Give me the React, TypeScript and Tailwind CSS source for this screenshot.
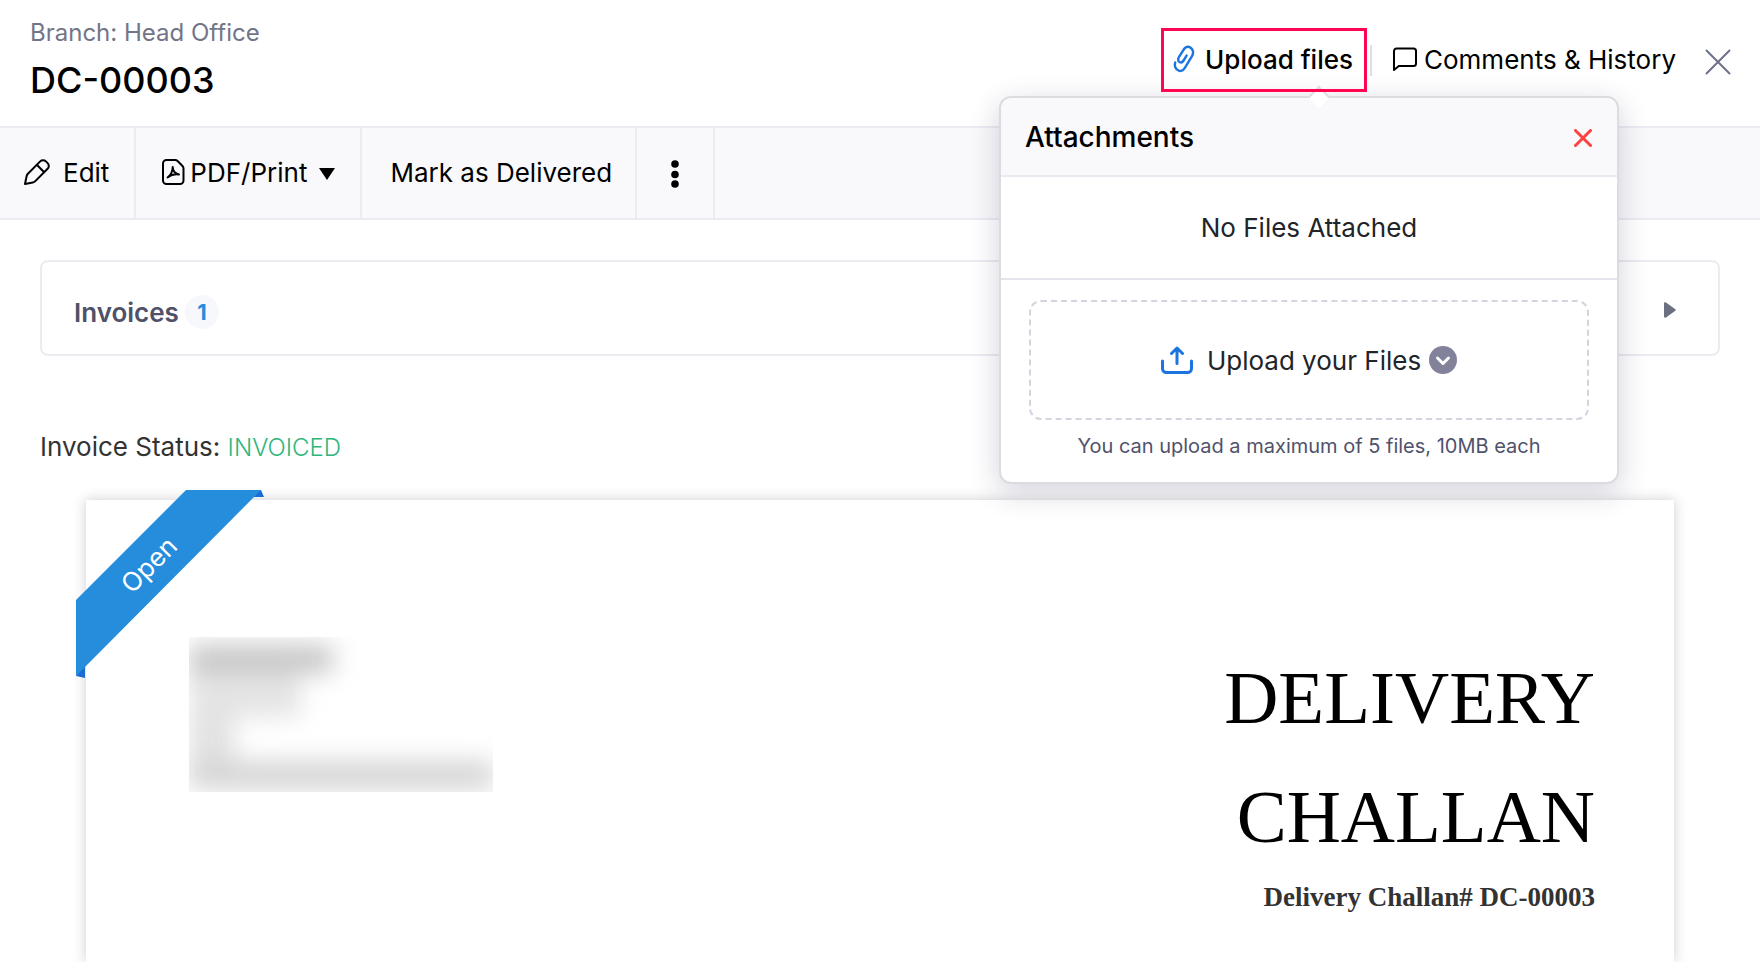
import React from 'react';

const PencilIcon = () => (
  <svg width="28" height="28" viewBox="0 0 28 28" fill="none" stroke="currentColor" strokeWidth="2" strokeLinejoin="round">
    <path d="M2 26l1.600-7.800c.2-1 .6-1.800 1.300-2.500L17.200 3.400a4 4 0 0 1 5.700 0l1.700 1.700a4 4 0 0 1 0 5.700L12.300 23.100c-.7.700-1.500 1.100-2.500 1.300L2 26z" />
    <path d="M13.800 6.800l7.400 7.400" />
  </svg>
);

const PdfIcon = () => (
  <svg width="24" height="28" viewBox="0 0 24 28" fill="none" stroke="currentColor" strokeWidth="2" strokeLinejoin="round" strokeLinecap="round">
    <path d="M5.500 2h8.700c.9 0 1.800.4 2.400 1l4.900 5c.6.600 1 1.500 1 2.400v12.100a3.500 3.500 0 0 1-3.500 3.500H5.500A3.500 3.500 0 0 1 2 22.500v-17A3.500 3.500 0 0 1 5.500 2z" />
    <path d="M6.500 19.500c3-2.200 5.200-6.500 5.200-10.500 0 3.500 2.500 6.500 6.300 7.500-3.800-.6-8 .3-11.500 3z" />
  </svg>
);

const ClipIcon = () => (
  <svg width="22" height="28" viewBox="0 0 22 28" fill="none" stroke="#1b74e0" strokeWidth="2.4" strokeLinecap="round">
    <path d="M2.200 17.500c-1 3.500.4 7.200 3.500 8.200 2.600.8 4.800-.6 6-2.700l7.300-11.800c1.800-3 1.300-7-1.500-8.600-2.700-1.500-5.400-.3-7 2.200l-4.600 7.400c-1.200 2-.8 4 .6 4.800 1.500.8 3.100.1 4.100-1.500l3-5" />
  </svg>
);

const CommentIcon = () => (
  <svg width="26" height="26" viewBox="0 0 26 26" fill="none" stroke="currentColor" strokeWidth="2" strokeLinejoin="round">
    <path d="M4.500 2.500h17A2.500 2.500 0 0 1 24 5v12.500a2.500 2.500 0 0 1-2.500 2.500H6.800L2 24V5a2.500 2.500 0 0 1 2.500-2.500z" />
  </svg>
);

const CrossIcon = ({ size, width }: { size: number; width: number }) => (
  <svg width={size} height={size} viewBox={`0 0 ${size} ${size}`} stroke="currentColor" strokeWidth={width} strokeLinecap="round">
    <path d={`M1.500 1.500L${size - 1.5} ${size - 1.5}M${size - 1.5} 1.500L1.500 ${size - 1.5}`} />
  </svg>
);

const UploadIcon = () => (
  <svg width="32" height="28" viewBox="0 0 32 28" fill="none" stroke="#1b74e0" strokeWidth="3" strokeLinecap="round" strokeLinejoin="round">
    <path d="M1.500 15v7.500a4 4 0 0 0 4 4h21a4 4 0 0 0 4-4V15" />
    <path d="M16 17.500V2.500M10.500 7.500L16 2l5.500 5.500" />
  </svg>
);

const AttachmentsPopup = () => (
  <div className="absolute top-[68px] right-[-252px] z-20 w-[620px] rounded-xl border-2 border-[#dcdce0] bg-white shadow-[0_8px_30px_rgba(30,30,80,0.2)]">
    <div className="absolute -top-[9px] left-[310px] size-4 rotate-45 border-t-2 border-l-2 border-[#dcdce0] bg-white" />
    <div className="flex h-[79px] items-center justify-between rounded-t-xl border-b-2 border-[#e9e9f2] bg-[#f9f9fb] pr-[25px] pl-6">
      <h2 className="text-[28px] leading-9 font-medium">Attachments</h2>
      <button aria-label="Close attachments" className="pt-[2px] text-[#fb4340]">
        <CrossIcon size={18} width={3} />
      </button>
    </div>
    <p className="flex h-[103px] items-center justify-center border-b-2 border-[#e4e4ec] text-[26px] text-[#212529]">
      No Files Attached
    </p>
    <div className="px-7 pt-5 pb-5">
      <button className="flex h-[120px] w-full items-center justify-center rounded-xl border-2 border-dashed border-[#d4d4e0] text-[26px] text-[#212529]">
        <UploadIcon />
        <span className="ml-[14px]">Upload your Files</span>
        <svg className="ml-2" width="28" height="28" viewBox="0 0 28 28" fill="none">
          <circle cx="14" cy="14" r="14" fill="#82829a" />
          <path d="M8.500 12l5.500 5.500 5.500-5.500" stroke="#fff" strokeWidth="3" strokeLinecap="round" strokeLinejoin="round" />
        </svg>
      </button>
      <p className="mt-[10px] text-center text-[20px] leading-8 text-[#50526a]">
        You can upload a maximum of 5 files, 10MB each
      </p>
    </div>
  </div>
);

const Header = () => (
  <header className="flex min-h-[126px] items-start justify-between">
    <div className="pt-[17px] pl-[30px]">
      <p className="text-2xl leading-8 text-[#717587]">Branch: Head Office</p>
      <h1 className="mt-[9px] text-4xl leading-[44px] font-medium">DC-00003</h1>
    </div>
    <div className="flex items-center pt-7 pr-[29px]">
      <div className="relative">
        <button className="relative z-30 flex h-16 items-center gap-[10px] border-[3px] border-[#ff0552] pr-[11px] pb-[2px] pl-[9px] text-[26px] font-medium">
          <ClipIcon />
          Upload files
        </button>
        <AttachmentsPopup />
      </div>
      <span className="ml-[3px] h-[31px] w-[2px] bg-[#dfdfe2]" />
      <button className="ml-5 flex items-center gap-[6px] pb-[2px] text-[26px]">
        <CommentIcon />
        Comments &amp; History
      </button>
      <button aria-label="Close" className="ml-[29px] pt-1 text-[#6c718a]">
        <CrossIcon size={26} width={2} />
      </button>
    </div>
  </header>
);

const Toolbar = () => (
  <nav className="flex h-[94px] border-y-2 border-[#ebebf2] bg-[#f9f9fb] text-[26px]">
    <button className="flex items-center border-r-2 border-[#ebebf2] pr-[25px] pb-[2px] pl-[23px]">
      <PencilIcon />
      <span className="ml-3">Edit</span>
    </button>
    <button className="flex items-center border-r-2 border-[#ebebf2] pr-[25px] pb-[2px] pl-[25px]">
      <PdfIcon />
      <span className="ml-[5px]">PDF/Print</span>
      <svg className="mt-1 ml-3" width="16" height="12" viewBox="0 0 16 12">
        <path d="M0 0h16L8 12z" fill="currentColor" />
      </svg>
    </button>
    <button className="border-r-2 border-[#ebebf2] pr-[23px] pb-[2px] pl-7">Mark as Delivered</button>
    <button aria-label="More actions" className="flex w-[78px] items-center justify-center border-r-2 border-[#ebebf2]">
      <svg width="8" height="30" viewBox="0 0 8 30" fill="currentColor">
        <circle cx="4" cy="6" r="3.800" />
        <circle cx="4" cy="16.500" r="3.800" />
        <circle cx="4" cy="26" r="3.800" />
      </svg>
    </button>
  </nav>
);

const Ribbon = () => (
  <div className="absolute -top-[10px] -left-[10px] size-[190px]">
    <svg width="190" height="190" viewBox="0 0 190 190">
      <path d="M174 7h14l-3-7h-5zM0 186l9 2v-14z" fill="#1a6dd4" />
      <path d="M0 110L110 0h75L0 186z" fill="#268ddd" />
    </svg>
    <span className="absolute top-[57px] left-[33px] w-20 -rotate-45 text-center text-[26px] leading-9 text-white">
      Open
    </span>
  </div>
);

// organization address is kept unreadable on purpose
const HiddenAddress = () => (
  <div className="h-[155px] w-[304px] overflow-hidden">
    <div className="flex flex-col items-start blur-[12px]">
      <div className="mt-2 h-7 w-[144px] bg-[#c6c6c6]" />
      <div className="h-11 w-[112px] bg-[#e4e4e4]" />
      <div className="h-11 w-[46px] bg-[#e2e2e2]" />
      <div className="h-7 w-[304px] bg-[#d4d4d4]" />
    </div>
  </div>
);

const Paper = () => (
  <section className="relative mx-[86px] mt-[33px] flex flex-1 items-start justify-between bg-white pr-[79px] pb-10 pl-[103px] shadow-[0_0_12px_rgba(60,60,80,0.25)]">
    <Ribbon />
    <div className="pt-[137px]">
      <HiddenAddress />
    </div>
    <div className="w-[400px] pt-[138px] text-right font-['Liberation_Serif',serif]">
      <h2 className="text-[75px] leading-[119px]">DELIVERY CHALLAN</h2>
      <p className="mt-[5px] text-[27px] leading-8 font-bold text-[#333]">Delivery Challan# DC-00003</p>
    </div>
  </section>
);

const App: React.FC = () => {
  return (
    <div className="flex min-h-screen flex-col overflow-hidden bg-white font-['Inter',sans-serif] text-black">
      <Header />
      <Toolbar />
      <section className="mx-10 mt-10 flex h-24 items-center justify-between rounded-lg border-2 border-[#ebebf2] pr-[42px] pl-8">
        <h3 className="flex items-center gap-[6px] pt-2 text-[26px] font-semibold text-[#4f5168]">
          Invoices
          <span className="flex size-[34px] items-center justify-center rounded-full bg-[#f6f8fc] text-[22px] font-bold text-[#268ddd]">
            1
          </span>
        </h3>
        <button aria-label="Expand invoices" className="pt-1 text-[#6c7080]">
          <svg width="12" height="16" viewBox="0 0 12 16">
            <path d="M0 1.500C0 .3 1 0 2 .6l9.300 6.600c.6.400.6 1.200 0 1.600L2 15.400c-1 .6-2 .3-2-.9z" fill="currentColor" />
          </svg>
        </button>
      </section>
      <p className="mt-[71px] ml-10 text-[26px] leading-10 text-[#333]">
        Invoice Status: <span className="text-2xl font-light text-[#2fb67c]">INVOICED</span>
      </p>
      <Paper />
    </div>
  );
};

export default App;
